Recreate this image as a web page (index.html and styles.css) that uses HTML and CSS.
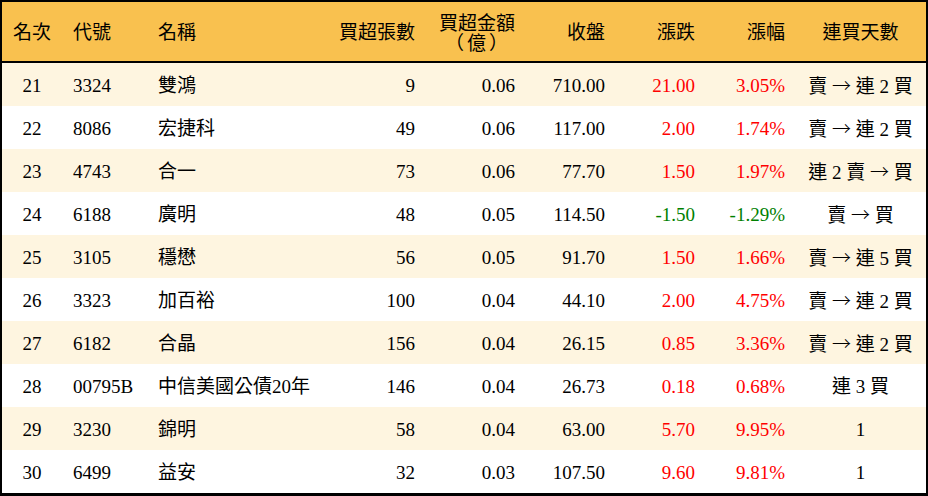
FILE: index.html
```html
<!DOCTYPE html>
<html lang="zh-Hant">
<head>
<meta charset="utf-8">
<title>買超排行</title>
<link rel="stylesheet" href="styles.css">
</head>
<body>
<table class="rank">
  <colgroup>
    <col class="c1"><col class="c2"><col class="c3"><col class="c4"><col class="c5"><col class="c6"><col class="c7"><col class="c8"><col class="c9">
  </colgroup>
  <thead>
    <tr>
      <th class="ctr">名次</th>
      <th class="lft">代號</th>
      <th class="lft">名稱</th>
      <th class="rgt">買超張數</th>
      <th class="rgt two">買超金額<br><span class="unit">（億）</span></th>
      <th class="rgt">收盤</th>
      <th class="rgt">漲跌</th>
      <th class="rgt">漲幅</th>
      <th class="ctr">連買天數</th>
    </tr>
  </thead>
  <tbody>
    <tr><td class="ctr">21</td><td class="lft">3324</td><td class="lft">雙鴻</td><td class="rgt">9</td><td class="rgt">0.06</td><td class="rgt">710.00</td><td class="rgt up">21.00</td><td class="rgt up">3.05%</td><td class="ctr">賣 <span class="arr">→</span> 連 2 買</td></tr>
    <tr><td class="ctr">22</td><td class="lft">8086</td><td class="lft">宏捷科</td><td class="rgt">49</td><td class="rgt">0.06</td><td class="rgt">117.00</td><td class="rgt up">2.00</td><td class="rgt up">1.74%</td><td class="ctr">賣 <span class="arr">→</span> 連 2 買</td></tr>
    <tr><td class="ctr">23</td><td class="lft">4743</td><td class="lft">合一</td><td class="rgt">73</td><td class="rgt">0.06</td><td class="rgt">77.70</td><td class="rgt up">1.50</td><td class="rgt up">1.97%</td><td class="ctr">連 2 賣 <span class="arr">→</span> 買</td></tr>
    <tr><td class="ctr">24</td><td class="lft">6188</td><td class="lft">廣明</td><td class="rgt">48</td><td class="rgt">0.05</td><td class="rgt">114.50</td><td class="rgt down">-1.50</td><td class="rgt down">-1.29%</td><td class="ctr">賣 <span class="arr">→</span> 買</td></tr>
    <tr><td class="ctr">25</td><td class="lft">3105</td><td class="lft">穩懋</td><td class="rgt">56</td><td class="rgt">0.05</td><td class="rgt">91.70</td><td class="rgt up">1.50</td><td class="rgt up">1.66%</td><td class="ctr">賣 <span class="arr">→</span> 連 5 買</td></tr>
    <tr><td class="ctr">26</td><td class="lft">3323</td><td class="lft">加百裕</td><td class="rgt">100</td><td class="rgt">0.04</td><td class="rgt">44.10</td><td class="rgt up">2.00</td><td class="rgt up">4.75%</td><td class="ctr">賣 <span class="arr">→</span> 連 2 買</td></tr>
    <tr><td class="ctr">27</td><td class="lft">6182</td><td class="lft">合晶</td><td class="rgt">156</td><td class="rgt">0.04</td><td class="rgt">26.15</td><td class="rgt up">0.85</td><td class="rgt up">3.36%</td><td class="ctr">賣 <span class="arr">→</span> 連 2 買</td></tr>
    <tr><td class="ctr">28</td><td class="lft">00795B</td><td class="lft">中信美國公債20年</td><td class="rgt">146</td><td class="rgt">0.04</td><td class="rgt">26.73</td><td class="rgt up">0.18</td><td class="rgt up">0.68%</td><td class="ctr">連 3 買</td></tr>
    <tr><td class="ctr">29</td><td class="lft">3230</td><td class="lft">錦明</td><td class="rgt">58</td><td class="rgt">0.04</td><td class="rgt">63.00</td><td class="rgt up">5.70</td><td class="rgt up">9.95%</td><td class="ctr">1</td></tr>
    <tr><td class="ctr">30</td><td class="lft">6499</td><td class="lft">益安</td><td class="rgt">32</td><td class="rgt">0.03</td><td class="rgt">107.50</td><td class="rgt up">9.60</td><td class="rgt up">9.81%</td><td class="ctr">1</td></tr>
  </tbody>
</table>
</body>
</html>
```
FILE: styles.css
```css
html, body {
  margin: 0;
  padding: 0;
  background: #ffffff;
}

body {
  font-family: "Liberation Serif", "Noto Sans CJK TC", serif;
  font-size: 19px;
  color: #000000;
}

.rank {
  width: 928px;
  table-layout: fixed;
  border-collapse: separate;
  border-spacing: 0;
  border: 2px solid #000000;
  border-bottom-width: 3px;
}

.c1 { width: 60px; }
.c2 { width: 85px; }
.c3 { width: 183px; }
.c4 { width: 95px; }
.c5 { width: 100px; }
.c6 { width: 90px; }
.c7 { width: 90px; }
.c8 { width: 90px; }
.c9 { width: 131px; }

.rank th {
  height: 61px;
  padding: 0;
  padding-top: 2px;
  background: #f9c14f;
  border-bottom: 2px solid #000000;
  font-weight: normal;
  line-height: 20px;
  vertical-align: middle;
  box-sizing: border-box;
}

.rank th.two {
  line-height: 20px;
  padding-top: 4px;
}

.unit {
  letter-spacing: 3px;
  margin-right: 4px;
}

.rank td {
  height: 43px;
  padding: 0;
  padding-top: 2px;
  line-height: 20px;
  vertical-align: middle;
  white-space: nowrap;
  box-sizing: border-box;
}

.rank tbody tr:nth-child(odd) td {
  background: #fef5e0;
}

.ctr { text-align: center; }
.lft { text-align: left; padding-left: 11px !important; }
.rgt { text-align: right; padding-right: 10px !important; }

.arr {
  font-family: "Noto Sans CJK JP", "DejaVu Sans", sans-serif;
  font-weight: 300;
}

.up { color: #ff0000; }
.down { color: #008000; }
```
